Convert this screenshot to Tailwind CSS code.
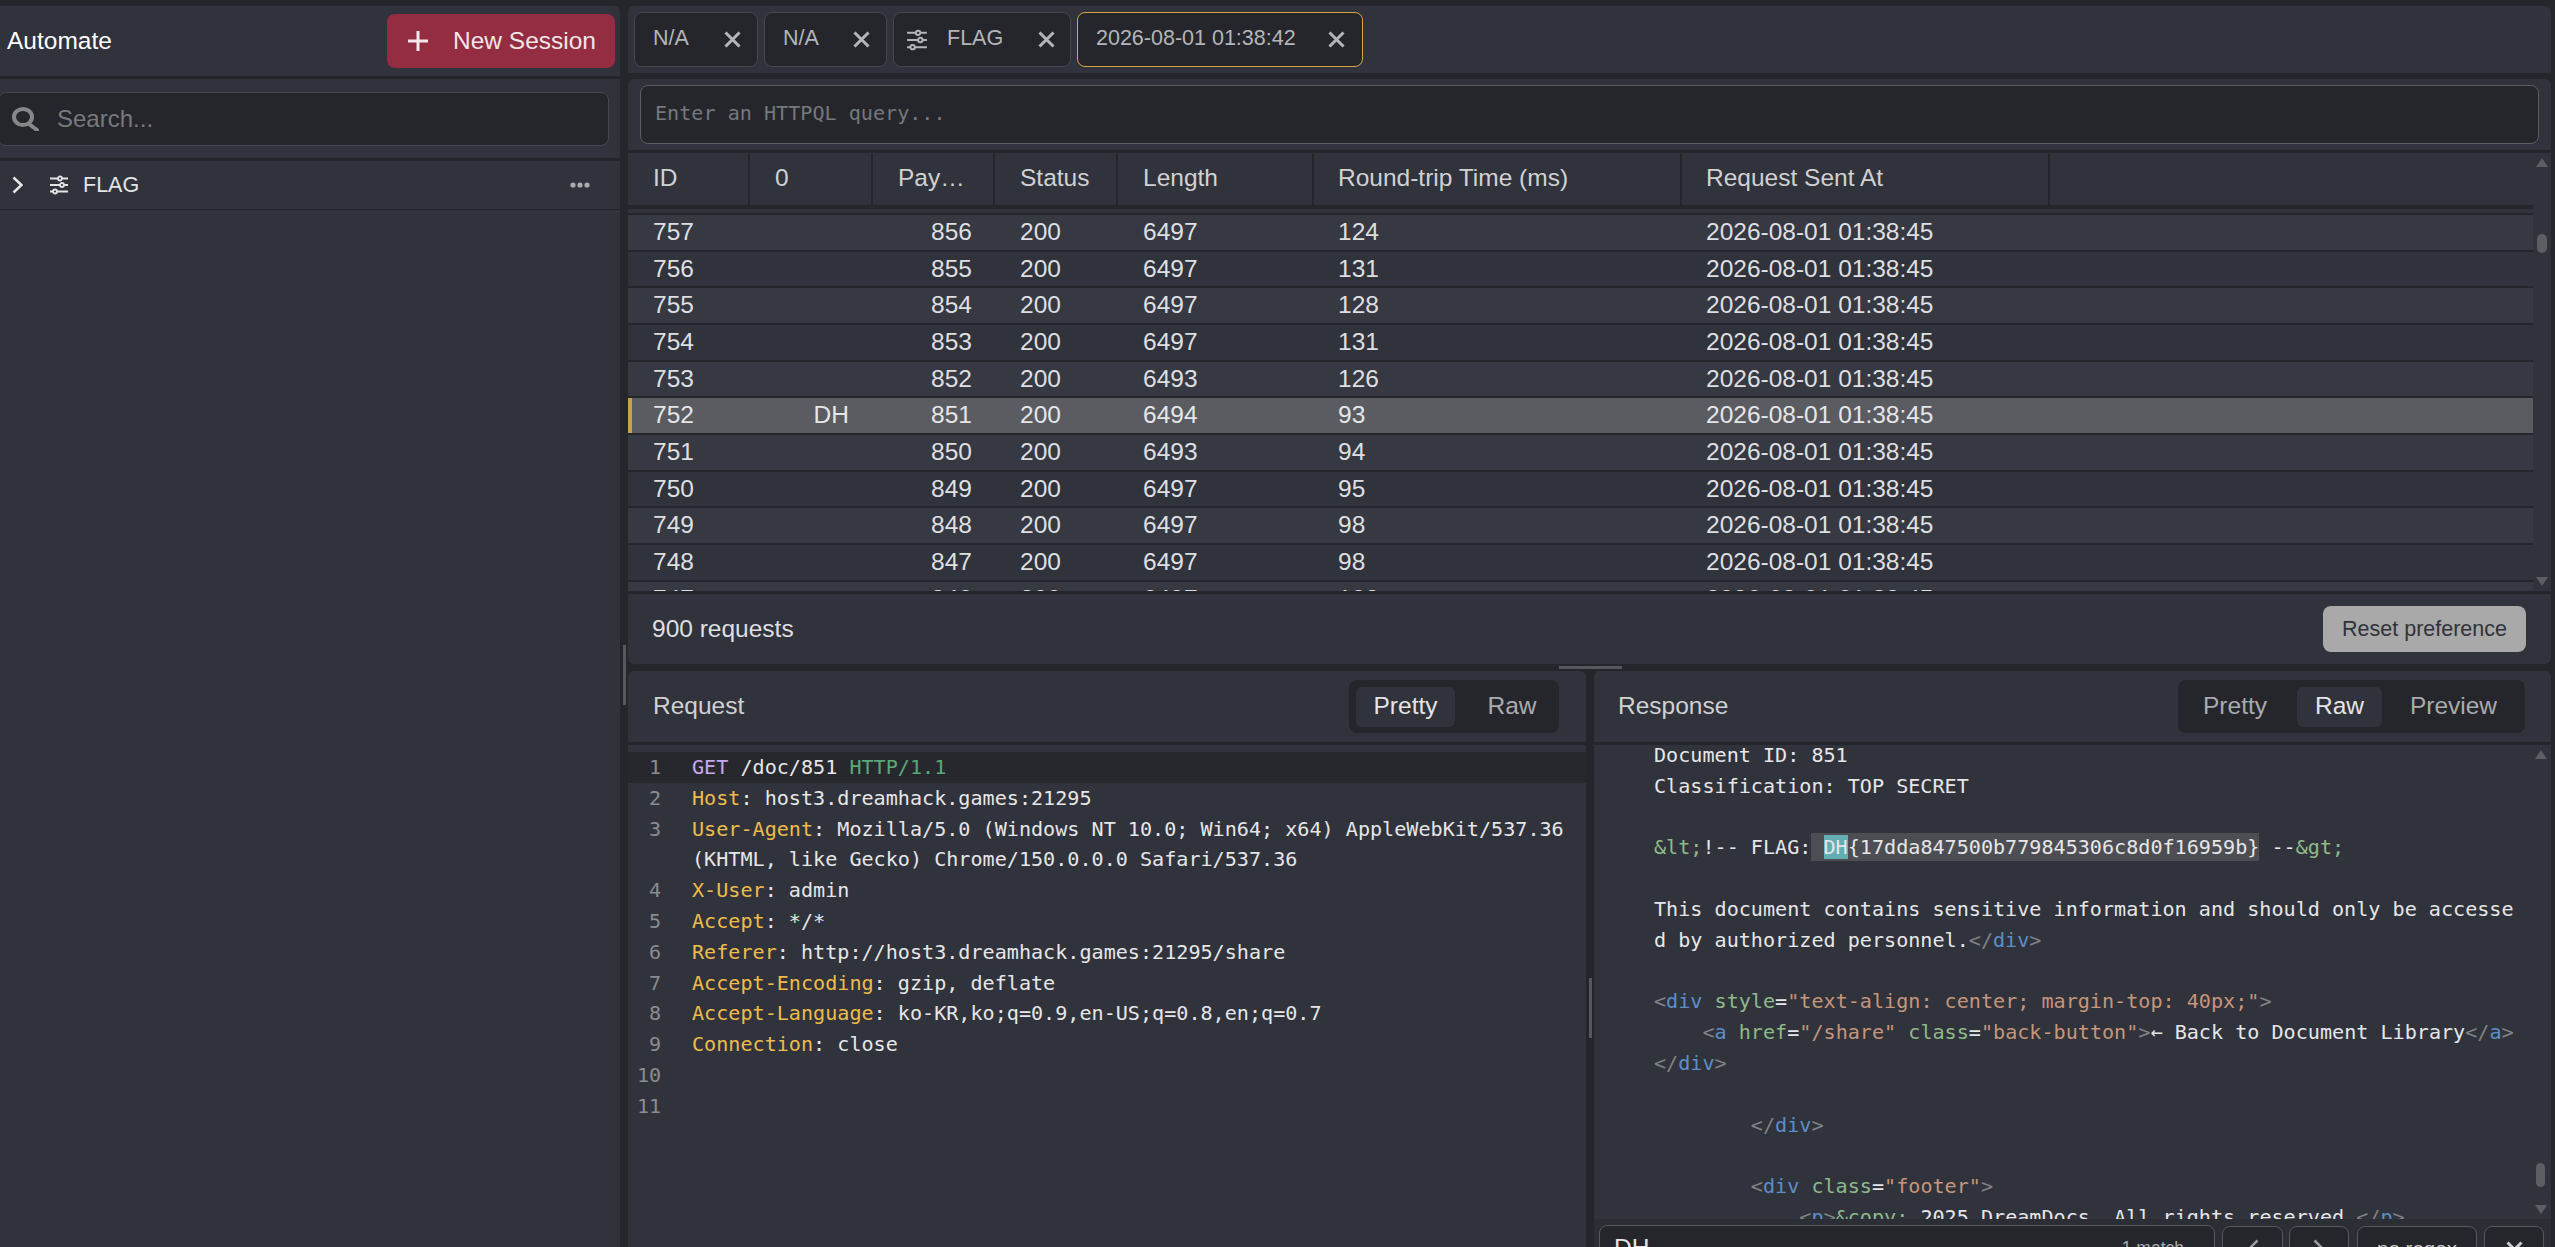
<!DOCTYPE html>
<html lang="en">
<head>
<meta charset="UTF-8">
<title>Automate</title>
<script src="https://cdn.jsdelivr.net/npm/@tailwindcss/browser@4"></script>
</head>
<body class="bg-[#25262b] h-screen overflow-hidden font-['Liberation_Sans',sans-serif]">
<div class="relative flex h-[1247px] w-[2555px] overflow-hidden pt-[6px]">

  <!-- Left sidebar -->
  <aside class="w-[620px] flex flex-col">
    <div class="h-[70px] shrink-0 bg-[#30333b] rounded-tr-md flex items-center justify-between pl-[7px] pr-[5px]">
      <span class="text-[24.5px] text-white">Automate</span>
      <button class="w-[228px] h-[54px] bg-[#942c42] rounded-lg flex items-center text-[24.5px] text-[#f0e6e8] pl-[20px]">
        <svg class="w-[22px] h-[22px] mr-[24px]" viewBox="0 0 22 22" fill="none" stroke="#f4e8ea" stroke-width="3"><path d="M11 1v20M1 11h20"/></svg>
        New Session
      </button>
    </div>
    <div class="mt-[3px] h-[79px] shrink-0 bg-[#30333b] flex items-center pr-[11px]">
      <div class="-ml-[2px] flex-1 h-[54px] bg-[#25262b] border border-[#44474f] rounded-lg flex items-center pl-[13px] text-[24px] text-[#77797e]">
        <svg class="w-[27px] h-[24px] mr-[18px]" viewBox="0 0 27 24" fill="none" stroke="#85878b" stroke-width="4"><ellipse cx="11" cy="10" rx="9" ry="8"/><path d="M17 17l8 6" stroke-linecap="round"/></svg>
        Search...
      </div>
    </div>
    <div class="mt-[3px] flex-1 bg-[#30333b]">
      <div class="h-[49px] border-b border-[#25262b] flex items-center pl-[12px] pr-[30px] text-[21.5px] text-[#e4e4e6]">
        <svg class="w-[11px] h-[18px] mr-[26px]" viewBox="0 0 11 18" fill="none" stroke="#e8e8ea" stroke-width="2.5"><path d="M1.5 1.5l8 7.5-8 7.5"/></svg>
        <svg class="w-[20px] h-[20px] mr-[14px]" viewBox="0 0 20 20" fill="none" stroke="#e4e4e6" stroke-width="1.8"><path d="M1 3.5h18M1 10h18M1 16.5h18"/><circle cx="11" cy="3.5" r="2" fill="#30333b"/><circle cx="13" cy="10" r="2" fill="#30333b"/><circle cx="6" cy="16.5" r="2" fill="#30333b"/></svg>
        <span class="flex-1">FLAG</span>
        <svg class="w-[20px] h-[6px]" viewBox="0 0 20 6" fill="#aaacb0"><circle cx="3" cy="3" r="2.6"/><circle cx="10" cy="3" r="2.6"/><circle cx="17" cy="3" r="2.6"/></svg>
      </div>
    </div>
  </aside>

  <main class="ml-[8px] w-[1923px] flex flex-col">
    <!-- Session tabs -->
    <div class="h-[67px] shrink-0 bg-[#30333b] rounded-t-md flex items-center gap-[6px] pl-[6px] text-[21.5px] text-[#b4b5b8]">
      <div class="w-[124px] h-[55px] bg-[#25262b] border border-[#44474f] rounded-lg flex items-center justify-between pl-[18px] pr-[16px]">
        <span class="pb-[2px]">N/A</span>
        <svg class="w-[17px] h-[17px]" viewBox="0 0 17 17" stroke="#b4b5b8" stroke-width="3"><path d="M1.5 1.5l14 14M15.5 1.5l-14 14"/></svg>
      </div>
      <div class="w-[123px] h-[55px] bg-[#25262b] border border-[#44474f] rounded-lg flex items-center justify-between pl-[18px] pr-[16px]">
        <span class="pb-[2px]">N/A</span>
        <svg class="w-[17px] h-[17px]" viewBox="0 0 17 17" stroke="#b4b5b8" stroke-width="3"><path d="M1.5 1.5l14 14M15.5 1.5l-14 14"/></svg>
      </div>
      <div class="w-[178px] h-[55px] bg-[#25262b] border border-[#44474f] rounded-lg flex items-center pl-[12px] pr-[15px]">
        <svg class="w-[22px] h-[22px] mr-[19px]" viewBox="0 0 20 20" fill="none" stroke="#b4b5b8" stroke-width="1.8"><path d="M1 3.5h18M1 10h18M1 16.5h18"/><circle cx="11" cy="3.5" r="2" fill="#25262b"/><circle cx="13" cy="10" r="2" fill="#25262b"/><circle cx="6" cy="16.5" r="2" fill="#25262b"/></svg>
        <span class="flex-1 pb-[2px]">FLAG</span>
        <svg class="w-[17px] h-[17px]" viewBox="0 0 17 17" stroke="#b4b5b8" stroke-width="3"><path d="M1.5 1.5l14 14M15.5 1.5l-14 14"/></svg>
      </div>
      <div class="w-[286px] h-[55px] bg-[#25262b] border border-[#d8a444] rounded-lg flex items-center justify-between pl-[18px] pr-[17px]">
        <span class="pb-[2px]">2026-08-01 01:38:42</span>
        <svg class="w-[17px] h-[17px]" viewBox="0 0 17 17" stroke="#b4b5b8" stroke-width="3"><path d="M1.5 1.5l14 14M15.5 1.5l-14 14"/></svg>
      </div>
    </div>

    <!-- HTTPQL query -->
    <div class="mt-[6px] h-[71px] shrink-0 bg-[#30333b] rounded-t-md pt-[6px] pl-[12px] pr-[12px]">
      <div class="h-[59px] pb-[2px] bg-[#25262b] border border-[#5c5e63] rounded-lg flex items-center pl-[14px] font-['DejaVu_Sans_Mono',monospace] text-[20.13px] text-[#76787c]">Enter an HTTPQL query...</div>
    </div>

    <!-- Requests table -->
    <div class="relative mt-[3px] h-[438px] shrink-0 bg-[#30333b] overflow-hidden text-[24.5px] text-[#dfdfe1] pr-[18px]">
      <div class="grid grid-cols-[122px_123px_122px_123px_196px_368px_368px] h-[52px] items-stretch text-[#d0d1d3]">
        <div class="border-r-2 border-[#25262b] pl-[25px] leading-[50px]">ID</div>
        <div class="border-r-2 border-[#25262b] pl-[25px] leading-[50px]">0</div>
        <div class="border-r-2 border-[#25262b] pl-[25px] leading-[50px]">Pay…</div>
        <div class="border-r-2 border-[#25262b] pl-[25px] leading-[50px]">Status</div>
        <div class="border-r-2 border-[#25262b] pl-[25px] leading-[50px]">Length</div>
        <div class="border-r-2 border-[#25262b] pl-[24px] leading-[50px]">Round-trip Time (ms)</div>
        <div class="border-r-2 border-[#25262b] pl-[24px] leading-[50px]">Request Sent At</div>
      </div>
      <div class="h-[4px] bg-[#25262b]"></div>
      <div class="h-[4px]"></div>
      <div class="h-[2px] bg-[#25262b]"></div>

      <div class="grid grid-cols-[122px_123px_122px_123px_196px_368px_368px] h-[36.67px] border-b-2 border-[#25262b] leading-[34px] bg-[#363942]"><div class="pl-[25px]">757</div><div></div><div class="text-right pr-[23px]">856</div><div class="pl-[25px]">200</div><div class="pl-[25px]">6497</div><div class="pl-[24px]">124</div><div class="pl-[24px]">2026-08-01 01:38:45</div></div>
      <div class="grid grid-cols-[122px_123px_122px_123px_196px_368px_368px] h-[36.67px] border-b-2 border-[#25262b] leading-[34px]"><div class="pl-[25px]">756</div><div></div><div class="text-right pr-[23px]">855</div><div class="pl-[25px]">200</div><div class="pl-[25px]">6497</div><div class="pl-[24px]">131</div><div class="pl-[24px]">2026-08-01 01:38:45</div></div>
      <div class="grid grid-cols-[122px_123px_122px_123px_196px_368px_368px] h-[36.67px] border-b-2 border-[#25262b] leading-[34px] bg-[#363942]"><div class="pl-[25px]">755</div><div></div><div class="text-right pr-[23px]">854</div><div class="pl-[25px]">200</div><div class="pl-[25px]">6497</div><div class="pl-[24px]">128</div><div class="pl-[24px]">2026-08-01 01:38:45</div></div>
      <div class="grid grid-cols-[122px_123px_122px_123px_196px_368px_368px] h-[36.67px] border-b-2 border-[#25262b] leading-[34px]"><div class="pl-[25px]">754</div><div></div><div class="text-right pr-[23px]">853</div><div class="pl-[25px]">200</div><div class="pl-[25px]">6497</div><div class="pl-[24px]">131</div><div class="pl-[24px]">2026-08-01 01:38:45</div></div>
      <div class="grid grid-cols-[122px_123px_122px_123px_196px_368px_368px] h-[36.67px] border-b-2 border-[#25262b] leading-[34px] bg-[#363942]"><div class="pl-[25px]">753</div><div></div><div class="text-right pr-[23px]">852</div><div class="pl-[25px]">200</div><div class="pl-[25px]">6493</div><div class="pl-[24px]">126</div><div class="pl-[24px]">2026-08-01 01:38:45</div></div>
      <div class="relative grid grid-cols-[122px_123px_122px_123px_196px_368px_368px] h-[36.67px] border-b-2 border-[#25262b] leading-[34px] bg-[#5b5c62] text-[#e6e6e8]"><span class="absolute left-0 top-0 bottom-0 w-[4px] bg-[#c9a050]"></span><div class="pl-[25px]">752</div><div class="text-right pr-[24px]">DH</div><div class="text-right pr-[23px]">851</div><div class="pl-[25px]">200</div><div class="pl-[25px]">6494</div><div class="pl-[24px]">93</div><div class="pl-[24px]">2026-08-01 01:38:45</div></div>
      <div class="grid grid-cols-[122px_123px_122px_123px_196px_368px_368px] h-[36.67px] border-b-2 border-[#25262b] leading-[34px] bg-[#363942]"><div class="pl-[25px]">751</div><div></div><div class="text-right pr-[23px]">850</div><div class="pl-[25px]">200</div><div class="pl-[25px]">6493</div><div class="pl-[24px]">94</div><div class="pl-[24px]">2026-08-01 01:38:45</div></div>
      <div class="grid grid-cols-[122px_123px_122px_123px_196px_368px_368px] h-[36.67px] border-b-2 border-[#25262b] leading-[34px]"><div class="pl-[25px]">750</div><div></div><div class="text-right pr-[23px]">849</div><div class="pl-[25px]">200</div><div class="pl-[25px]">6497</div><div class="pl-[24px]">95</div><div class="pl-[24px]">2026-08-01 01:38:45</div></div>
      <div class="grid grid-cols-[122px_123px_122px_123px_196px_368px_368px] h-[36.67px] border-b-2 border-[#25262b] leading-[34px] bg-[#363942]"><div class="pl-[25px]">749</div><div></div><div class="text-right pr-[23px]">848</div><div class="pl-[25px]">200</div><div class="pl-[25px]">6497</div><div class="pl-[24px]">98</div><div class="pl-[24px]">2026-08-01 01:38:45</div></div>
      <div class="grid grid-cols-[122px_123px_122px_123px_196px_368px_368px] h-[36.67px] border-b-2 border-[#25262b] leading-[34px]"><div class="pl-[25px]">748</div><div></div><div class="text-right pr-[23px]">847</div><div class="pl-[25px]">200</div><div class="pl-[25px]">6497</div><div class="pl-[24px]">98</div><div class="pl-[24px]">2026-08-01 01:38:45</div></div>
      <div class="grid grid-cols-[122px_123px_122px_123px_196px_368px_368px] h-[36.67px] border-b-2 border-[#25262b] leading-[34px] bg-[#363942]"><div class="pl-[25px]">747</div><div></div><div class="text-right pr-[23px]">846</div><div class="pl-[25px]">200</div><div class="pl-[25px]">6497</div><div class="pl-[24px]">102</div><div class="pl-[24px]">2026-08-01 01:38:45</div></div>

      <!-- table scrollbar -->
      <div class="absolute right-0 top-0 bottom-0 w-[18px] bg-[#30333b]">
        <svg class="absolute left-[3px] top-[5px] w-[12px] h-[9px]" viewBox="0 0 12 9" fill="#5c5e64"><path d="M6 0l6 9H0z"/></svg>
        <div class="absolute left-[4px] top-[81px] w-[10px] h-[19px] rounded-full bg-[#5c5e64]"></div>
        <svg class="absolute left-[3px] bottom-[5px] w-[12px] h-[9px]" viewBox="0 0 12 9" fill="#5c5e64"><path d="M6 9l6-9H0z"/></svg>
      </div>
    </div>

    <!-- Table footer -->
    <div class="mt-[3px] h-[70px] shrink-0 bg-[#30333b] rounded-b-md flex items-center justify-between pl-[24px] pr-[25px]">
      <span class="text-[24.5px] text-[#dfdfe1]">900 requests</span>
      <button class="w-[203px] h-[46px] bg-[#a9a9a9] rounded-lg text-[21.5px] text-[#30333b]">Reset preference</button>
    </div>

    <!-- Request / response -->
    <div class="mt-[7px] flex-1 min-h-0 flex gap-[8px]">
      <section class="w-[958px] flex flex-col">
        <div class="h-[71px] shrink-0 bg-[#30333b] rounded-t-md flex items-center justify-between pl-[25px] pr-[27px] text-[24.5px]">
          <span class="text-[#d0d1d3]">Request</span>
          <div class="w-[210px] h-[53px] bg-[#25262b] rounded-lg flex items-center pl-[7px]">
            <div class="w-[99px] h-[40px] bg-[#30333b] rounded-md flex items-center justify-center text-[#e4e4e6]">Pretty</div>
            <div class="flex-1 pl-[10px] text-center text-[#aaabae]">Raw</div>
          </div>
        </div>
        <div class="mt-[3px] flex-1 bg-[#30333b] pt-[7px] font-['DejaVu_Sans_Mono',monospace] text-[20.13px] leading-[30.8px] text-[#e6e6e8]">
          <div class="flex bg-[#27282d]"><span class="w-[64px] pl-[21px] text-[#8a8c90]">1</span><span><span class="text-[#c8a8f0]">GET</span> /doc/851 <span class="text-[#5aa878]">HTTP/1.1</span></span></div>
          <div class="flex"><span class="w-[64px] pl-[21px] text-[#8a8c90]">2</span><span><span class="text-[#eebb4d]">Host</span>: host3.dreamhack.games:21295</span></div>
          <div class="flex"><span class="w-[64px] pl-[21px] text-[#8a8c90]">3</span><span><span class="text-[#eebb4d]">User-Agent</span>: Mozilla/5.0 (Windows NT 10.0; Win64; x64) AppleWebKit/537.36<br>(KHTML, like Gecko) Chrome/150.0.0.0 Safari/537.36</span></div>
          <div class="flex"><span class="w-[64px] pl-[21px] text-[#8a8c90]">4</span><span><span class="text-[#eebb4d]">X-User</span>: admin</span></div>
          <div class="flex"><span class="w-[64px] pl-[21px] text-[#8a8c90]">5</span><span><span class="text-[#eebb4d]">Accept</span>: */*</span></div>
          <div class="flex"><span class="w-[64px] pl-[21px] text-[#8a8c90]">6</span><span><span class="text-[#eebb4d]">Referer</span>: http://host3.dreamhack.games:21295/share</span></div>
          <div class="flex"><span class="w-[64px] pl-[21px] text-[#8a8c90]">7</span><span><span class="text-[#eebb4d]">Accept-Encoding</span>: gzip, deflate</span></div>
          <div class="flex"><span class="w-[64px] pl-[21px] text-[#8a8c90]">8</span><span><span class="text-[#eebb4d]">Accept-Language</span>: ko-KR,ko;q=0.9,en-US;q=0.8,en;q=0.7</span></div>
          <div class="flex"><span class="w-[64px] pl-[21px] text-[#8a8c90]">9</span><span><span class="text-[#eebb4d]">Connection</span>: close</span></div>
          <div class="flex"><span class="w-[64px] pl-[9px] text-[#8a8c90]">10</span></div>
          <div class="flex"><span class="w-[64px] pl-[9px] text-[#8a8c90]">11</span></div>
        </div>
      </section>

      <section class="flex-1 min-w-0 flex flex-col">
        <div class="h-[71px] shrink-0 bg-[#30333b] rounded-t-md flex items-center justify-between pl-[24px] pr-[26px] text-[24.5px]">
          <span class="text-[#d0d1d3]">Response</span>
          <div class="w-[347px] h-[53px] bg-[#25262b] rounded-lg flex items-center text-[#aaabae]">
            <div class="w-[119px] pr-[5px] text-center">Pretty</div>
            <div class="w-[85px] h-[40px] bg-[#30333b] rounded-md flex items-center justify-center text-[#e4e4e6]">Raw</div>
            <div class="flex-1 text-center">Preview</div>
          </div>
        </div>
        <div class="relative mt-[3px] h-[474px] shrink-0 overflow-hidden bg-[#30333b] pl-[60px] font-['DejaVu_Sans_Mono',monospace] text-[20.13px] leading-[30.8px] text-[#e6e6e8]">
          <div class="-mt-[5px] whitespace-pre">Document ID: 851
Classification: TOP SECRET

<span class="text-[#8fb98a]">&amp;lt;</span>!-- FLAG:<span class="bg-[#4d4e54] py-[2px]"> <span class="bg-[#62aeb3]">DH</span>{17dda847500b779845306c8d0f16959b}</span> --<span class="text-[#8fb98a]">&amp;gt;</span>

This document contains sensitive information and should only be accesse
d by authorized personnel.<span class="text-[#808184]">&lt;/</span><span class="text-[#5b8fc9]">div</span><span class="text-[#808184]">&gt;</span>

<span class="text-[#808184]">&lt;</span><span class="text-[#5b8fc9]">div</span> <span class="text-[#8fb98a]">style</span>=<span class="text-[#c6957a]">"text-align: center; margin-top: 40px;"</span><span class="text-[#808184]">&gt;</span>
    <span class="text-[#808184]">&lt;</span><span class="text-[#5b8fc9]">a</span> <span class="text-[#8fb98a]">href</span>=<span class="text-[#c6957a]">"/share"</span> <span class="text-[#8fb98a]">class</span>=<span class="text-[#c6957a]">"back-button"</span><span class="text-[#808184]">&gt;</span>← Back to Document Library<span class="text-[#808184]">&lt;/</span><span class="text-[#5b8fc9]">a</span><span class="text-[#808184]">&gt;</span>
<span class="text-[#808184]">&lt;/</span><span class="text-[#5b8fc9]">div</span><span class="text-[#808184]">&gt;</span>

        <span class="text-[#808184]">&lt;/</span><span class="text-[#5b8fc9]">div</span><span class="text-[#808184]">&gt;</span>

        <span class="text-[#808184]">&lt;</span><span class="text-[#5b8fc9]">div</span> <span class="text-[#8fb98a]">class</span>=<span class="text-[#c6957a]">"footer"</span><span class="text-[#808184]">&gt;</span>
            <span class="text-[#808184]">&lt;</span><span class="text-[#5b8fc9]">p</span><span class="text-[#808184]">&gt;</span><span class="text-[#8fb98a]">&amp;copy;</span> 2025 DreamDocs. All rights reserved.<span class="text-[#808184]">&lt;/</span><span class="text-[#5b8fc9]">p</span><span class="text-[#808184]">&gt;</span></div>
          <div class="absolute right-0 top-0 bottom-0 w-[18px] bg-[#30333b]">
            <svg class="absolute left-[2px] top-[5px] w-[12px] h-[9px]" viewBox="0 0 12 9" fill="#5c5e64"><path d="M6 0l6 9H0z"/></svg>
            <div class="absolute left-[3px] top-[418px] w-[9px] h-[24px] rounded-full bg-[#5c5e64]"></div>
            <svg class="absolute left-[2px] bottom-[5px] w-[12px] h-[9px]" viewBox="0 0 12 9" fill="#5c5e64"><path d="M6 9l6-9H0z"/></svg>
          </div>
        </div>
        <!-- Find bar, cut off by the window -->
        <div class="h-[80px] shrink-0 bg-[#2c2e35] flex items-start pt-[6px] pl-[5px] text-[#c9cacc]">
          <div class="w-[616px] h-[46px] shrink-0 bg-[#25262b] border border-[#55585f] rounded-lg flex items-center justify-between pl-[14px] pr-[30px] text-[24.5px] text-[#e4e4e6]">
            <span>DH</span><span class="text-[17.5px] text-[#a8a9ac]">1 match</span>
          </div>
          <div class="ml-[7px] mt-[1px] w-[61px] h-[46px] shrink-0 bg-[#25262b] border border-[#55585f] rounded-lg flex items-center justify-center">
            <svg class="w-[12px] h-[20px]" viewBox="0 0 12 20" fill="none" stroke="#9a9ca0" stroke-width="2.5"><path d="M10.5 1.5L2 10l8.5 8.5"/></svg>
          </div>
          <div class="ml-[6px] mt-[1px] w-[60px] h-[46px] shrink-0 bg-[#25262b] border border-[#55585f] rounded-lg flex items-center justify-center">
            <svg class="w-[12px] h-[20px]" viewBox="0 0 12 20" fill="none" stroke="#9a9ca0" stroke-width="2.5"><path d="M1.5 1.5L10 10l-8.5 8.5"/></svg>
          </div>
          <div class="ml-[8px] mt-[1px] w-[120px] h-[46px] shrink-0 bg-[#25262b] border border-[#55585f] rounded-lg flex items-center justify-center text-[20.5px]">no regex</div>
          <div class="ml-[7px] mt-[1px] w-[60px] h-[46px] shrink-0 bg-[#25262b] border border-[#55585f] rounded-lg flex items-center justify-center">
            <svg class="w-[17px] h-[17px]" viewBox="0 0 17 17" stroke="#c9cacc" stroke-width="3"><path d="M1.5 1.5l14 14M15.5 1.5l-14 14"/></svg>
          </div>
        </div>
      </section>
    </div>
  </main>

  <!-- pane resize handles -->
  <div class="absolute left-[623px] top-[645px] w-[3px] h-[60px] bg-[#55585f]"></div>
  <div class="absolute left-[1559px] top-[666px] w-[63px] h-[3px] bg-[#55585f]"></div>
  <div class="absolute left-[1589px] top-[978px] w-[3px] h-[60px] bg-[#55585f]"></div>
</div>
</body>
</html>
